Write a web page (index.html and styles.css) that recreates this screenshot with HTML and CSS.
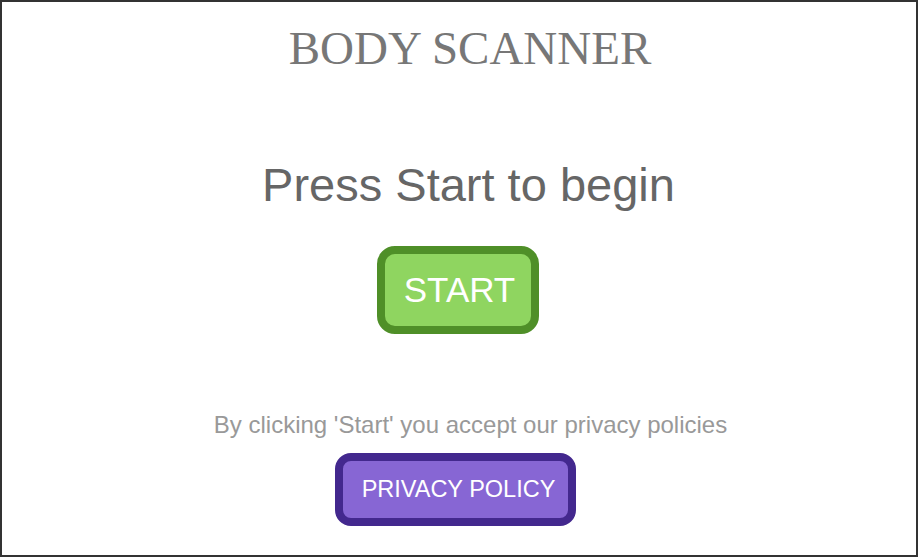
FILE: index.html
```html
<!DOCTYPE html>
<html lang="en">
<head>
<meta charset="utf-8">
<title>Body Scanner</title>
<link rel="stylesheet" href="styles.css">
</head>
<body>
<main class="app">
  <h1 class="title">BODY SCANNER</h1>
  <p class="prompt">Press Start to begin</p>
  <button class="btn btn-start" type="button">START</button>
  <p class="notice">By clicking 'Start' you accept our privacy policies</p>
  <button class="btn btn-privacy" type="button">PRIVACY POLICY</button>
</main>
</body>
</html>
```
FILE: styles.css
```css
html, body {
  margin: 0;
  padding: 0;
  background: #ffffff;
}

.app {
  box-sizing: border-box;
  width: 918px;
  height: 557px;
  border: 2px solid #333333;
  display: flex;
  flex-direction: column;
  align-items: center;
  font-family: "Liberation Sans", Arial, sans-serif;
}

.title {
  margin: 21px 0 0 22px;
  font-family: "Liberation Serif", "Times New Roman", serif;
  font-weight: normal;
  font-size: 47px;
  line-height: 50px;
  color: #777777;
}

.prompt {
  margin: 87px 0 0 19px;
  font-size: 47px;
  line-height: 50px;
  color: #666666;
}

.btn {
  font-family: "Liberation Sans", Arial, sans-serif;
  color: #ffffff;
  cursor: pointer;
}

.btn-start {
  margin: 36px 2px 0 0;
  width: 162px;
  height: 88px;
  border: 8px solid #4f8f28;
  border-radius: 18px;
  background: #8fd560;
  font-size: 35px;
  padding: 0 0 0 3px;
}

.notice {
  margin: 78px 0 0 23px;
  font-size: 24px;
  line-height: 26px;
  color: #999999;
}

.btn-privacy {
  margin: 15px 7px 0 0;
  width: 241px;
  height: 73px;
  border: 8px solid #43288e;
  border-radius: 16px;
  background: #8766d4;
  font-size: 23.5px;
  padding: 0 0 0 6px;
}
```
